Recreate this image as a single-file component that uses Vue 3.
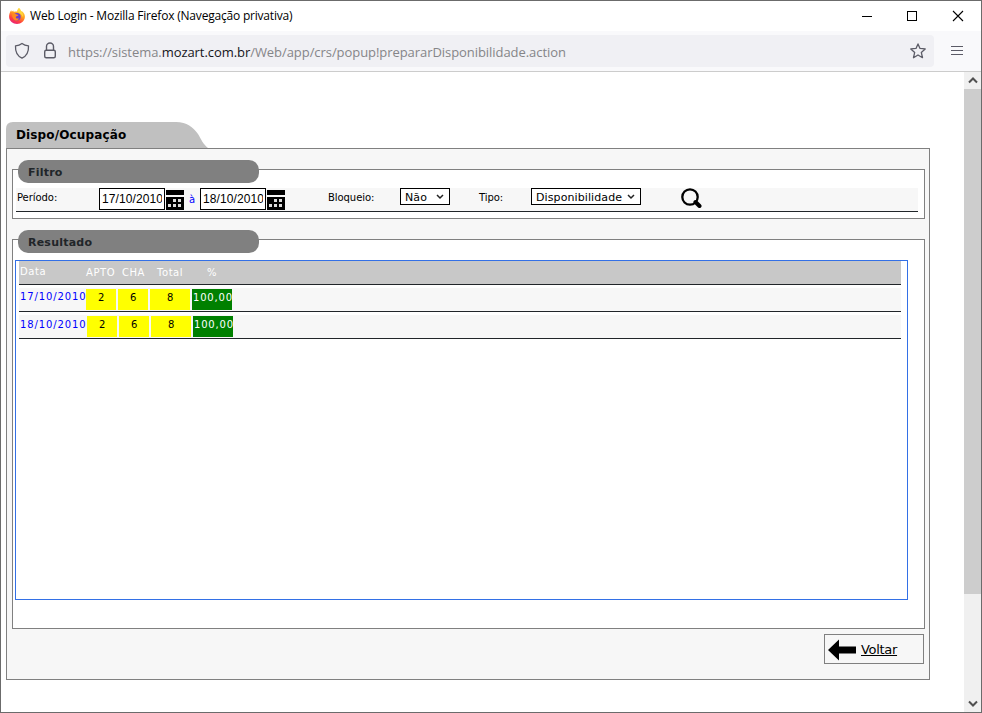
<template>
  <div class="window">
    <!-- Barra de título -->
    <header class="titlebar">
      <svg class="firefox" viewBox="0 0 16 16">
        <defs>
          <linearGradient id="flame" x1="0.8" y1="0" x2="0.3" y2="1">
            <stop offset="0" stop-color="#ffe14a" />
            <stop offset="0.45" stop-color="#ff9a1f" />
            <stop offset="0.75" stop-color="#ff4040" />
            <stop offset="1" stop-color="#e8207c" />
          </linearGradient>
        </defs>
        <path d="M10 0c1 1 1.700 2 2 3.200 1.200-.1 1.900.5 2.500 1.500C15.500 6 16 7.500 15.900 9c-.3 4-3.700 7-7.900 7S.3 13 .1 9C0 6.500.7 4.400 2.200 2.300l.6 1.500L4.300 2.500l.5 1.400c1-.5 2.200-.6 3.400-.3C8.500 2 9 1 10 0z" fill="url(#flame)" />
        <circle cx="8" cy="8.700" r="3.700" fill="#6a3fd0" />
        <path d="M3 6c1.500-.8 3.400-.6 4.800.5L9.500 7c-.4 1-1.500 1.100-2.400 1.500-.5.500-.4 1.200.2 1.700 1 .6 2 .4 2.700 0-.6 1.700-1.400 2.300-2.600 2.300C5 12.500 3 10 3 6z" fill="#ff8a20" />
        <path d="M10 0c1 1 1.700 2 2 3.200 1.700 1.600 2.600 3.700 2 6.300-.6-2-1.600-3.300-3.200-4.200C9.500 4.500 8.700 3.900 8.200 3.600 8.500 2 9 1 10 0z" fill="#ffd83c" />
      </svg>
      <span class="title">Web Login - Mozilla Firefox (Navegação privativa)</span>
      <svg class="controls" viewBox="0 0 104 12" shape-rendering="crispEdges">
        <path d="M1 6.500h10M46.500 1.500h9v9h-9z" fill="none" stroke="#000" />
        <path d="M92 1l10 10M102 1l-10 10" fill="none" stroke="#000" shape-rendering="auto" stroke-width="1.100" />
      </svg>
    </header>

    <!-- Barra de endereço -->
    <div class="toolbar">
      <div class="urlbar">
        <svg class="shield" viewBox="0 0 16 18">
          <path d="M8 1.500C6 3 4 3.600 1.500 3.900c-.3 5.500 1.500 10 6.500 12.300 5-2.300 6.800-6.800 6.500-12.300C12 3.600 10 3 8 1.500z" fill="none" stroke="#5b5b66" stroke-width="1.300" stroke-linejoin="round" />
        </svg>
        <svg class="lock" viewBox="0 0 14 18">
          <rect x="1.700" y="8.200" width="10.600" height="7.600" rx="1.500" fill="none" stroke="#5b5b66" stroke-width="1.400" />
          <path d="M3.500 8V4.500a3.500 3.500 0 0 1 7 0V8" fill="none" stroke="#5b5b66" stroke-width="1.400" />
        </svg>
        <span class="url">https://sistema.<b>mozart.com.br</b>/Web/app/crs/popup!prepararDisponibilidade.action</span>
        <svg class="star" viewBox="0 0 16 16">
          <path d="M8 .9l2 4.500 5.200.5-3.900 3.500 1.200 5.300L8 12l-4.500 2.700 1.200-5.300L.8 5.900 6 5.400z" fill="none" stroke="#5b5b66" stroke-width="1.300" stroke-linejoin="round" />
        </svg>
      </div>
      <svg class="menu" viewBox="0 0 12 10">
        <path d="M0 .5h12M0 4.500h12M0 8.500h12" stroke="#5b5b66" stroke-width="1.200" />
      </svg>
    </div>

    <div class="viewport">
      <main class="page">
        <div class="tab">
          <svg class="tab-shape" viewBox="0 0 202 26">
            <path d="M0 26V7q0-7 7-7h163c11 0 17 5 22 12 3 5 5 10 10 14z" fill="#c0c0c0" />
          </svg>
          <span class="tab-title">Dispo/Ocupação</span>
        </div>

        <div class="panel">
          <!-- Filtro -->
          <section class="group filter">
            <h2 class="legend">Filtro</h2>
            <div class="filter-row">
              <label class="lbl lbl-periodo">Período:</label>
              <template v-for="(date, i) in period" :key="date">
                <span v-if="i > 0" class="sep">à</span>
                <span class="date"><span class="date-text">{{ date }}</span></span>
                <svg class="calendar" viewBox="0 0 18 20" shape-rendering="crispEdges">
                  <path d="M0 0h18v5H0zM0 7h18v13H0z" fill="#000" />
                  <path d="M7 9h3v3H7zM12 9h3v3h-3zM2 14h3v3H2zM7 14h3v3H7zM12 14h3v3h-3z" fill="#ddd" />
                </svg>
              </template>
              <label class="lbl lbl-bloqueio">Bloqueio:</label>
              <span class="select select-bloqueio">
                <span>Não</span>
                <svg class="caret" viewBox="0 0 8 6"><path d="M1 1l3 3 3-3" fill="none" stroke="#222" stroke-width="1.500" /></svg>
              </span>
              <label class="lbl lbl-tipo">Tipo:</label>
              <span class="select select-tipo">
                <span>Disponibilidade</span>
                <svg class="caret" viewBox="0 0 8 6"><path d="M1 1l3 3 3-3" fill="none" stroke="#222" stroke-width="1.500" /></svg>
              </span>
              <svg class="search" viewBox="0 0 21 20">
                <circle cx="9" cy="9" r="7.700" fill="none" stroke="#000" stroke-width="2.300" />
                <path d="M14.500 14l4 4" stroke="#000" stroke-width="4" stroke-linecap="round" />
              </svg>
            </div>
          </section>

          <!-- Resultado -->
          <section class="group result">
            <h2 class="legend">Resultado</h2>
            <div class="grid-box">
              <div class="grid-head">
                <span class="c-date">Data</span>
                <span class="h-apto">APTO</span>
                <span class="h-cha">CHA</span>
                <span class="h-total">Total</span>
                <span class="h-pct">%</span>
              </div>
              <div v-for="row in rows" :key="row.date" class="grid-row">
                <span class="c-date">{{ row.date }}</span>
                <span class="cell">{{ row.apto }}</span>
                <span class="cell">{{ row.cha }}</span>
                <span class="cell wide">{{ row.total }}</span>
                <span class="cell wide pct">{{ row.pct }}</span>
              </div>
            </div>
          </section>

          <button class="back" type="button">
            <svg class="arrow" viewBox="0 0 28 22">
              <path d="M0 11L11 .5V7.500h17v7H11v7z" fill="#000" />
            </svg>
            <span class="back-text">Voltar</span>
          </button>
        </div>
      </main>

      <!-- Barra de rolagem -->
      <div class="scrollbar">
        <div class="sb-btn">
          <svg viewBox="0 0 10 7"><path d="M1 5.500l4-4 4 4" fill="none" stroke="#505050" stroke-width="2" /></svg>
        </div>
        <div class="sb-thumb"></div>
        <div class="sb-btn sb-down">
          <svg viewBox="0 0 10 7"><path d="M1 1.500l4 4 4-4" fill="none" stroke="#505050" stroke-width="2" /></svg>
        </div>
      </div>
    </div>
  </div>
</template>

<script setup>
const period = ["17/10/2010", "18/10/2010"];

const rows = [
  { date: "17/10/2010", apto: 2, cha: 6, total: 8, pct: "100,00" },
  { date: "18/10/2010", apto: 2, cha: 6, total: 8, pct: "100,00" },
];
</script>

<style>
body {
  margin: 0;
  background: #fff;
}
</style>

<style scoped>
.window {
  box-sizing: border-box;
  width: 982px;
  height: 713px;
  border: 1px solid #6b6b6b;
  background: #fff;
  display: flex;
  flex-direction: column;
  overflow: hidden;
  font-family: "DejaVu Sans", sans-serif;
}

svg {
  display: block;
  flex: none;
}

span,
label {
  white-space: nowrap;
}

/* Barra de título */
.titlebar {
  height: 30px;
  display: flex;
  align-items: center;
  padding-left: 8px;
}

.firefox {
  width: 16px;
  height: 16px;
}

.title {
  margin-left: 5px;
  font: 12px/16px "Open Sans", sans-serif;
  letter-spacing: -0.2px;
  color: #000;
}

.controls {
  width: 104px;
  height: 12px;
  margin: 0 16px 1px auto;
}

/* Barra de endereço */
.toolbar {
  height: 40px;
  box-sizing: border-box;
  background: #f9f9fb;
  display: flex;
  align-items: center;
  padding-left: 5px;
}

.urlbar {
  width: 928px;
  height: 32px;
  background: #f0f0f4;
  border-radius: 4px;
  display: flex;
  align-items: center;
}

.shield {
  width: 16px;
  height: 18px;
  margin-left: 8px;
}

.lock {
  width: 14px;
  height: 18px;
  margin-left: 13px;
}

.url {
  margin-left: 11px;
  padding-top: 2px;
  font: 13px/20px "Open Sans", sans-serif;
  letter-spacing: -0.06px;
  color: #858588;
}

.url b {
  font-weight: 400;
  color: #15141a;
}

.star {
  width: 16px;
  height: 16px;
  margin: 0 8px 0 auto;
}

.menu {
  width: 12px;
  height: 10px;
  margin-left: 17px;
}

/* Área da página */
.viewport {
  flex: 1;
  display: flex;
  border-top: 1px solid #ccc;
}

.page {
  flex: 1;
  padding: 50px 0 0 5px;
}

.tab {
  height: 26px;
  display: grid;
}

.tab-shape {
  grid-area: 1 / 1;
  width: 202px;
  height: 26px;
}

.tab-title {
  grid-area: 1 / 1;
  padding-left: 10px;
  font-size: 12px;
  font-weight: 700;
  line-height: 26px;
  letter-spacing: 0.13px;
}

.panel {
  box-sizing: border-box;
  width: 924px;
  height: 532px;
  border: 1px solid #808080;
  background: #f7f7f7;
  padding: 20px 4px 0 5px;
}

.group {
  box-sizing: border-box;
  width: 913px;
  border: 1px solid #808080;
  background: #fff;
}

.filter {
  height: 50px;
}

.result {
  height: 390px;
  margin-top: 20px;
}

.legend {
  box-sizing: border-box;
  width: 241px;
  height: 23px;
  margin: -10px 0 0 5px;
  padding-left: 10px;
  border-radius: 10px;
  background: #808080;
  color: #212529;
  font-size: 11px;
  font-weight: 700;
  line-height: 25px;
  letter-spacing: 0.22px;
}

/* Linha de filtros */
.filter-row {
  box-sizing: border-box;
  width: 902px;
  height: 24px;
  margin: 5px 0 0 3px;
  border-bottom: 1px solid #212529;
  background: #f7f7f7;
  display: flex;
  align-items: flex-start;
}

.lbl {
  box-sizing: border-box;
  font-size: 10px;
  line-height: 19px;
  letter-spacing: -0.06px;
  color: #000;
}

.lbl-periodo {
  width: 83px;
  padding-left: 1px;
}

.date {
  box-sizing: border-box;
  width: 66px;
  height: 22px;
  border: 1px solid #000;
  background: #fff;
  padding: 0 2px;
}

.date-text {
  display: block;
  overflow: hidden;
  font: 12px/20px "Liberation Sans", sans-serif;
  letter-spacing: 0.1px;
}

.calendar {
  width: 18px;
  height: 20px;
  margin: 2px 0 0 1px;
}

.sep {
  box-sizing: border-box;
  width: 16px;
  padding-left: 5px;
  font-size: 10px;
  line-height: 23px;
  color: #00f;
}

.lbl-bloqueio {
  width: 72px;
  margin-left: 43px;
}

.select {
  box-sizing: border-box;
  height: 17px;
  border: 1px solid #000;
  background: #fff;
  display: flex;
  align-items: center;
  justify-content: space-between;
  padding: 0 5px 0 4px;
  font-size: 11px;
  line-height: 15px;
  letter-spacing: 0.1px;
}

.select span {
  padding-top: 1px;
}

.select-bloqueio {
  width: 50px;
}

.select-tipo {
  width: 110px;
}

.caret {
  width: 8px;
  height: 6px;
}

.lbl-tipo {
  width: 52px;
  margin-left: 29px;
}

.search {
  width: 21px;
  height: 20px;
  margin-left: 40px;
}

/* Grade de resultado */
.grid-box {
  box-sizing: border-box;
  width: 893px;
  height: 340px;
  margin: 7px 0 0 2px;
  border: 1px solid #3370e6;
  padding-left: 3px;
}

.grid-head,
.grid-row {
  box-sizing: border-box;
  width: 882px;
  height: 24px;
  border-bottom: 1px solid #212529;
  display: flex;
  font-size: 10px;
  letter-spacing: 0.55px;
}

.grid-head {
  background: #c8c8c8;
  color: #fff;
  line-height: 23px;
}

.grid-row {
  margin-top: 3px;
  background: #f7f7f7;
}

.c-date {
  box-sizing: border-box;
  width: 67px;
  padding-left: 1px;
}

.grid-head .c-date {
  line-height: 22px;
}

.grid-row .c-date {
  color: #00f;
  line-height: 18px;
  letter-spacing: 0.88px;
}

.h-apto {
  width: 36px;
}

.h-cha {
  width: 35px;
}

.h-total {
  width: 50px;
}

.cell {
  width: 30px;
  height: 21px;
  margin: 1px 2px 0 0;
  background: #ff0;
  color: #000;
  font-size: 10px;
  line-height: 18px;
  text-indent: 1px;
  text-align: center;
}

.wide {
  width: 40px;
}

.pct {
  background: #008000;
  color: #fff;
  letter-spacing: 0.8px;
}

/* A segunda linha fica um pixel mais à direita */
.grid-row + .grid-row .c-date {
  width: 68px;
  line-height: 20px;
}

/* Botão voltar */
.back {
  box-sizing: border-box;
  width: 100px;
  height: 30px;
  margin: 5px 1px 0 auto;
  border: 1px solid #808080;
  background: #f7f7f7;
  padding: 0 0 0 3px;
  display: flex;
  align-items: center;
  gap: 5px;
  font: 13px/18px "DejaVu Sans", sans-serif;
  letter-spacing: -0.3px;
  color: #000;
}

.back-text {
  padding-top: 2px;
  text-decoration: underline;
}

.arrow {
  width: 28px;
  height: 22px;
  margin-top: 2px;
}

/* Barra de rolagem */
.scrollbar {
  width: 17px;
  background: #f0f0f0;
  display: flex;
  flex-direction: column;
}

.sb-btn {
  height: 17px;
  display: flex;
  align-items: center;
  justify-content: center;
}

.sb-btn svg {
  width: 10px;
  height: 7px;
}

.sb-thumb {
  height: 505px;
  background: #cdcdcd;
}

.sb-down {
  margin-top: auto;
}
</style>
